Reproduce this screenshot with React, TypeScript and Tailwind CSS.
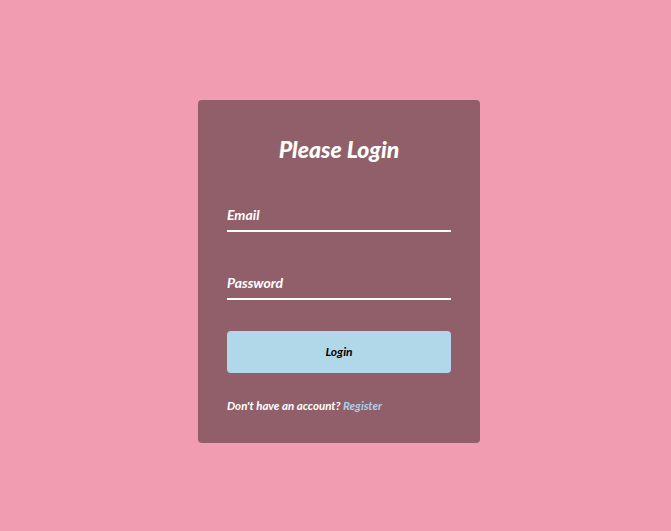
export default function App() {
  return (
    <div
      className="min-h-[531px] w-full bg-[#f19cb0] pt-[100px] pl-[198px]"
      style={{ fontFamily: 'Lato, "Open Sans", sans-serif' }}
    >
      <div className="w-[282px] rounded-[4px] bg-[#915f6a] px-[29px] pt-[34px] pb-[29px] italic">
        <h1 className="text-center text-[23px] font-black leading-[30px] text-white">Please Login</h1>

        <form className="mt-[37px]" onSubmit={(e) => e.preventDefault()}>
          <input
            type="email"
            placeholder="Email"
            className="block h-[31px] w-full border-b-2 border-white bg-transparent pb-[3px] text-[14px] font-bold italic text-white outline-none placeholder:text-white"
          />
          <input
            type="password"
            placeholder="Password"
            className="mt-[37px] block h-[31px] w-full border-b-2 border-white bg-transparent pb-[3px] text-[14px] font-bold italic text-white outline-none placeholder:text-white"
          />
          <button
            type="submit"
            className="mt-[31px] block h-[42px] w-full rounded-[4px] bg-[#b1d8e8] text-[12px] font-bold italic text-black"
          >
            Login
          </button>
        </form>

        <p className="mt-[24px] text-[11.5px] font-bold text-white">
          Don&apos;t have an account? <a className="text-[#a9cfe3]" href="#">Register</a>
        </p>
      </div>
    </div>
  )
}
